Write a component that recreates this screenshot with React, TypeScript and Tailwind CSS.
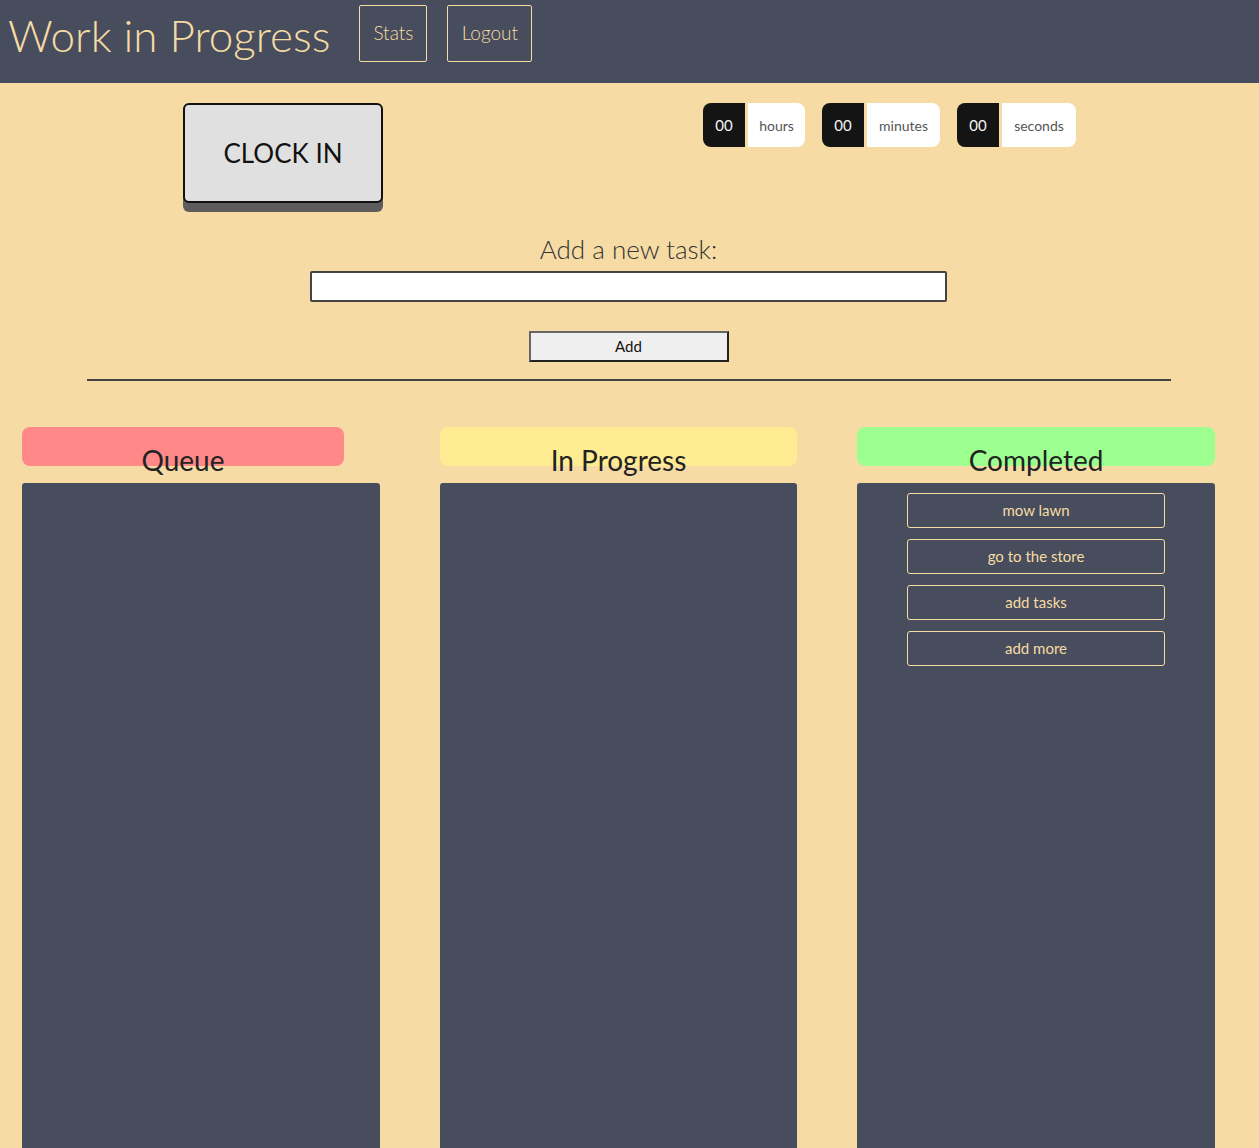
const tasks = ["mow lawn", "go to the store", "add tasks", "add more"];

const TimeBox = ({ label, width }: { label: string; width: string }) => {
  return (
    <div className="flex items-stretch h-[44px]">
      <div className="w-[42px] bg-[#141414] text-[#f4f4f4] rounded-l-[8px] flex items-center justify-center text-[15px]">
        00
      </div>
      <div
        className={`${width} ml-[3px] bg-white text-[#555] rounded-r-[8px] flex items-center justify-center text-[14px]`}
      >
        {label}
      </div>
    </div>
  );
};

const Column = ({
  title,
  pill,
  width,
  pillWidth,
  items,
}: {
  title: string;
  pill: string;
  width: string;
  pillWidth: string;
  items: string[];
}) => {
  return (
    <div className={`${width} flex flex-col`}>
      <div className={`${pillWidth} h-[39px] ${pill} rounded-[8px] flex justify-center`}>
        <h2 className="pt-[15px] text-[28px] leading-[36px] text-[#222] whitespace-nowrap">
          {title}
        </h2>
      </div>
      <div className="mt-[17px] h-[700px] bg-[#474d5c] rounded-t-[3px] pt-[10px] flex flex-col items-center gap-[11px]">
        {items.map((t) => (
          <div
            key={t}
            className="w-[258px] h-[35px] border border-[#f6dba4] rounded-[3px] text-[#f6dba4] text-[15px] flex items-center justify-center"
          >
            {t}
          </div>
        ))}
      </div>
    </div>
  );
};

const App = () => {
  return (
    <div
      className="min-h-screen h-[1148px] overflow-hidden bg-[#f6dba4]"
      style={{ fontFamily: "Lato, 'Open Sans', sans-serif" }}
    >
      {/* Header */}
      <header className="h-[83px] bg-[#474d5c] flex items-start pl-[8px]">
        <h1 className="mt-[7px] text-[44px] leading-[56px] font-light text-[#f6dba4] whitespace-nowrap">
          Work in Progress
        </h1>
        <button className="ml-[29px] mt-[5px] w-[68px] h-[57px] border border-[#f6dba4] rounded-[2px] text-[#f6dba4] text-[19px] font-light">
          Stats
        </button>
        <button className="ml-[20px] mt-[5px] w-[85px] h-[57px] border border-[#f6dba4] rounded-[2px] text-[#f6dba4] text-[19px] font-light">
          Logout
        </button>
      </header>

      {/* Clock + timer */}
      <section className="flex items-start pt-[20px]">
        <div className="ml-[183px] w-[200px] h-[109px]">
          <button className="w-[200px] h-[100px] bg-[#e0e0e0] border-2 border-[#111] rounded-[6px] text-[26px] text-[#111] shadow-[0_9px_0_#5c5c5c]">
            CLOCK IN
          </button>
        </div>
        <div className="ml-[320px] flex gap-[17px]">
          <TimeBox label="hours" width="w-[57px]" />
          <TimeBox label="minutes" width="w-[73px]" />
          <TimeBox label="seconds" width="w-[74px]" />
        </div>
      </section>

      {/* Add task */}
      <section className="flex flex-col items-center mt-[21px] pr-[2px]">
        <label className="text-[26px] leading-[32px] font-light text-[#333]">
          Add a new task:
        </label>
        <input
          type="text"
          className="mt-[6px] w-[637px] h-[31px] bg-white border-2 border-[#444] rounded-[2px] outline-none px-2"
        />
        <button className="mt-[29px] w-[200px] h-[31px] bg-[#efefef] border-2 border-t-[#666] border-l-[#666] border-r-[#222] border-b-[#222] text-[15px] text-[#111]">
          Add
        </button>
        <hr className="mt-[17px] w-[1084px] border-0 h-[2px] bg-[#444]" />
      </section>

      {/* Columns */}
      <section className="mt-[46px] pl-[22px] flex gap-[60px]">
        <Column title="Queue" pill="bg-[#ff8888]" width="w-[358px]" pillWidth="w-[322px]" items={[]} />
        <Column title="In Progress" pill="bg-[#ffeb92]" width="w-[357px]" pillWidth="w-[357px]" items={[]} />
        <Column title="Completed" pill="bg-[#9cff8f]" width="w-[358px]" pillWidth="w-[358px]" items={tasks} />
      </section>
    </div>
  );
};

export default App;
